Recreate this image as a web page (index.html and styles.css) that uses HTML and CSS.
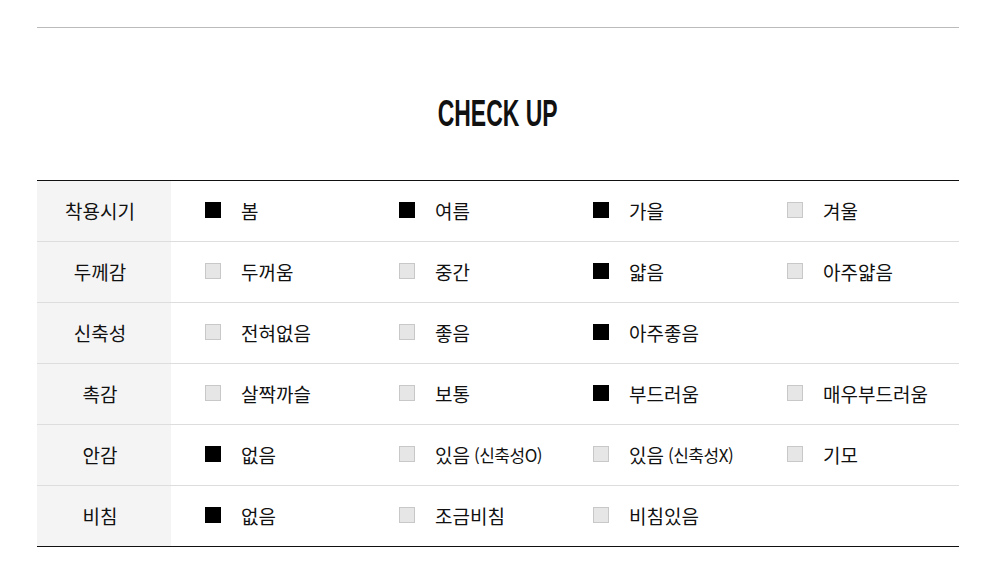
FILE: index.html
```html
<!DOCTYPE html>
<html lang="ko">
<head>
  <meta charset="UTF-8">
  <title>Check Up</title>
  <link rel="stylesheet" href="styles.css">
</head>
<body>
  <div class="wrap">
    <h2 class="title"><span>CHECK UP</span></h2>
    <div class="check">
      <div class="row">
        <div class="head">착용시기</div>
        <div class="items">
          <div class="item on"><i></i>봄</div>
          <div class="item on"><i></i>여름</div>
          <div class="item on"><i></i>가을</div>
          <div class="item"><i></i>겨울</div>
        </div>
      </div>
      <div class="row">
        <div class="head">두께감</div>
        <div class="items">
          <div class="item"><i></i>두꺼움</div>
          <div class="item"><i></i>중간</div>
          <div class="item on"><i></i>얇음</div>
          <div class="item"><i></i>아주얇음</div>
        </div>
      </div>
      <div class="row">
        <div class="head">신축성</div>
        <div class="items">
          <div class="item"><i></i>전혀없음</div>
          <div class="item"><i></i>좋음</div>
          <div class="item on"><i></i>아주좋음</div>
        </div>
      </div>
      <div class="row">
        <div class="head">촉감</div>
        <div class="items">
          <div class="item"><i></i>살짝까슬</div>
          <div class="item"><i></i>보통</div>
          <div class="item on"><i></i>부드러움</div>
          <div class="item"><i></i>매우부드러움</div>
        </div>
      </div>
      <div class="row">
        <div class="head">안감</div>
        <div class="items">
          <div class="item on"><i></i>없음</div>
          <div class="item"><i></i>있음<small>(신축성O)</small></div>
          <div class="item"><i></i>있음<small>(신축성X)</small></div>
          <div class="item"><i></i>기모</div>
        </div>
      </div>
      <div class="row">
        <div class="head">비침</div>
        <div class="items">
          <div class="item on"><i></i>없음</div>
          <div class="item"><i></i>조금비침</div>
          <div class="item"><i></i>비침있음</div>
        </div>
      </div>
    </div>
  </div>
</body>
</html>
```

FILE: styles.css
```css
body {
  margin: 0;
  background: #fff;
  color: #111;
  font-family: "Noto Sans CJK KR", "Noto Sans", sans-serif;
}

.wrap {
  width: 922px;
  margin: 27px 0 0 37px;
  border-top: 1px solid #bbb;
}

.title {
  margin: 0;
  padding: 63px 0 43px;
  height: 46px;
  line-height: 46px;
  text-align: center;
  font-family: "Liberation Sans", Arial, sans-serif;
  font-size: 37px;
  font-weight: bold;
  color: #111;
}

.title span {
  display: inline-block;
  transform: scaleX(0.62);
}

.check {
  border-top: 1px solid #111;
  border-bottom: 1px solid #111;
}

.row {
  display: flex;
  height: 60px;
  border-bottom: 1px solid #ddd;
}

.row:last-child {
  border-bottom: 0;
}

.head {
  flex: 0 0 126px;
  padding-right: 8px;
  background: #f4f4f4;
  display: flex;
  align-items: center;
  justify-content: center;
  font-size: 19px;
  padding-bottom: 2px;
}

.items {
  flex: 1;
  min-width: 0;
  display: flex;
  align-items: center;
  padding-left: 34px;
}

.item {
  flex: 0 0 194px;
  display: flex;
  align-items: center;
  font-size: 19px;
  white-space: nowrap;
  padding-bottom: 2px;
}

.item:nth-child(4) {
  flex-basis: auto;
}

.item i {
  flex: 0 0 auto;
  width: 14px;
  height: 14px;
  margin-right: 20px;
  background: #e6e6e6;
  border: 1px solid #c8c8c8;
}

.item.on i {
  background: #000;
  border-color: #000;
}

.item small {
  font-size: 17px;
  margin-left: 4px;
  letter-spacing: -0.5px;
}
```
